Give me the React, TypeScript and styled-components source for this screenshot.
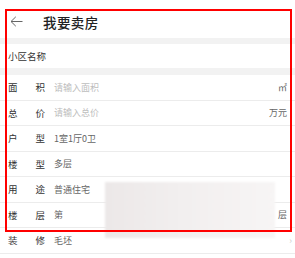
import * as React from "react";
import styled, { createGlobalStyle } from "styled-components";

const GlobalStyle = createGlobalStyle`
  html, body {
    margin: 0;
    padding: 0;
    background: #fff;
    font-family: "Noto Sans CJK SC", "Noto Sans", sans-serif;
  }
`;

const SPage = styled.div`
  position: relative;
  width: 295px;
  height: 258px;
  overflow: hidden;
  background: #fff;
`;

const SHeader = styled.header`
  height: 38px;
  display: flex;
  align-items: center;
  padding: 5px 0 0 10px;
  box-sizing: border-box;
`;

const SBack = styled.svg`
  display: block;
  flex: none;
  width: 13px;
  height: 11px;
  margin-right: 20px;
`;

const STitle = styled.h1`
  margin: 0;
  font-size: 13.5px;
  font-weight: 500;
  color: #222;
  letter-spacing: 0.4px;
`;

const SGap = styled.div<{ $h: number }>`
  height: ${(p) => p.$h}px;
  background: #f2f2f2;
`;

const SRow = styled.div<{ $h?: number; $line?: boolean }>`
  height: ${(p) => p.$h ?? 25.5}px;
  box-sizing: border-box;
  display: flex;
  align-items: center;
  padding: 0 8px;
  border-bottom: ${(p) => (p.$line ? "1px solid #ececec" : "none")};
  font-size: 9.5px;
`;

const SLabel = styled.span`
  width: 37px;
  flex: none;
  display: flex;
  justify-content: space-between;
  color: #333;
  font-size: 9.5px;
  margin-right: 9px;
`;

const SPlainLabel = styled.span`
  color: #333;
  font-size: 9.5px;
`;

const SValue = styled.span<{ $hint?: boolean }>`
  flex: 1;
  color: ${(p) => (p.$hint ? "#bdbdbd" : "#666")};
  font-size: 9px;
`;

const SUnit = styled.span`
  color: #666;
  font-size: 9px;
`;

const SChevron = styled.span`
  color: #ccc;
  font-size: 9px;
  margin-right: -5px;
`;

const SFrame = styled.div`
  position: absolute;
  left: 5px;
  top: 9px;
  width: 287px;
  height: 223px;
  box-sizing: border-box;
  border: 2px solid #f00;
  pointer-events: none;
`;

const SBlur = styled.div`
  position: absolute;
  left: 105px;
  top: 182px;
  width: 170px;
  height: 56px;
  background: linear-gradient(90deg, #ece8e8 0%, #f2efef 45%, #f7f5f5 100%);
  filter: blur(1px);
`;

interface IField {
  label: [string, string];
  value: string;
  hint?: boolean;
  unit?: string;
  arrow?: boolean;
}

const fields: IField[] = [
  { label: ["面", "积"], value: "请输入面积", hint: true, unit: "㎡" },
  { label: ["总", "价"], value: "请输入总价", hint: true, unit: "万元" },
  { label: ["户", "型"], value: "1室1厅0卫" },
  { label: ["楼", "型"], value: "多层" },
  { label: ["用", "途"], value: "普通住宅" },
  { label: ["楼", "层"], value: "第", unit: "层" },
  { label: ["装", "修"], value: "毛坯", arrow: true },
];

class App extends React.Component {
  public render() {
    return (
      <SPage>
        <GlobalStyle />
        <SHeader>
          <SBack viewBox="0 0 13 11">
            <path
              d="M12.5 5.5H1M5.8 0.8L1 5.5l4.8 4.7"
              fill="none"
              stroke="#666"
              strokeWidth="1"
            />
          </SBack>
          <STitle>我要卖房</STitle>
        </SHeader>
        <SGap $h={6} />
        <SRow $h={24}>
          <SPlainLabel>小区名称</SPlainLabel>
        </SRow>
        <SGap $h={7} />
        {fields.map((f) => (
          <SRow key={f.label.join("")} $line>
            <SLabel>
              <span>{f.label[0]}</span>
              <span>{f.label[1]}</span>
            </SLabel>
            <SValue $hint={f.hint}>{f.value}</SValue>
            {f.unit && <SUnit>{f.unit}</SUnit>}
            {f.arrow && <SChevron>›</SChevron>}
          </SRow>
        ))}
        <SBlur />
        <SFrame />
      </SPage>
    );
  }
}

export default App;
